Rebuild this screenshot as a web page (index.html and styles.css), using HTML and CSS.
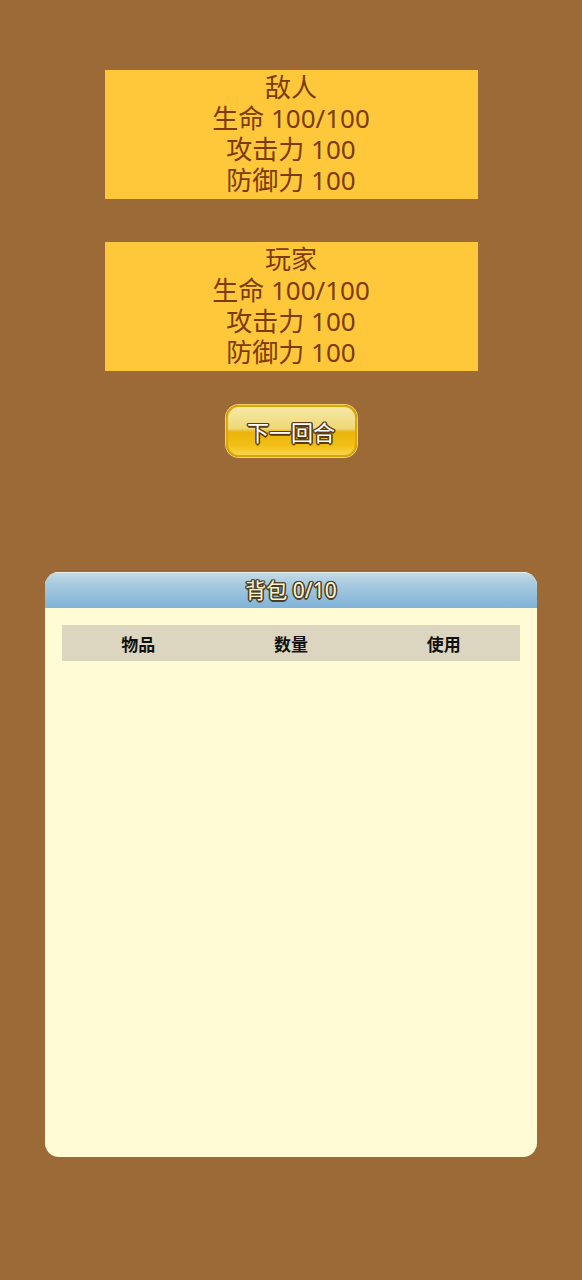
FILE: index.html
```html
<!DOCTYPE html>
<html lang="zh">
<head>
<meta charset="utf-8">
<link rel="stylesheet" href="styles.css">
</head>
<body>
<div class="page">
  <div class="stat-box">
    <div>敌人</div>
    <div>生命 100/100</div>
    <div>攻击力 100</div>
    <div>防御力 100</div>
  </div>
  <div class="stat-box player">
    <div>玩家</div>
    <div>生命 100/100</div>
    <div>攻击力 100</div>
    <div>防御力 100</div>
  </div>
  <button class="next-btn"><span>下一回合</span></button>
  <div class="bag">
    <div class="bag-header">背包 0/10</div>
    <div class="bag-body">
      <div class="bag-table-head">
        <div>物品</div>
        <div>数量</div>
        <div>使用</div>
      </div>
    </div>
  </div>
</div>
</body>
</html>
```

FILE: styles.css
```css
html, body {
  margin: 0;
  padding: 0;
  background: #9b6a37;
}
body {
  font-family: "Noto Sans", "Noto Sans CJK SC", sans-serif;
  height: 1280px;
}
.page {
  display: flex;
  flex-direction: column;
  align-items: center;
  padding-top: 70px;
}
.stat-box {
  width: 373px;
  box-sizing: border-box;
  height: 129px;
  padding: 2px 0 3px;
  background: #ffc83b;
  color: #7b3b0c;
  font-size: 26px;
  line-height: 31px;
  text-align: center;
}
.stat-box.player {
  margin-top: 43px;
}
.next-btn {
  margin-top: 34px;
  width: 131px;
  height: 52px;
  border-radius: 13px;
  border: 2px solid #d9a70a;
  box-shadow: 0 0 0 1px #f3d46a;
  background: linear-gradient(to bottom, #f6e9a6 0%, #efd876 45%, #eab40c 52%, #f2bf16 80%, #f8d54a 100%);
  padding: 0;
  font-family: "Noto Sans", "Noto Sans CJK SC", sans-serif;
  font-size: 22px;
  font-weight: 400;
  color: #ffffff;
  text-shadow: -1.5px 0 #5a3a12, 1.5px 0 #5a3a12, 0 -1.5px #5a3a12, 0 1.5px #5a3a12,
    -1px -1px #5a3a12, 1px 1px #5a3a12, -1px 1px #5a3a12, 1px -1px #5a3a12;
  box-sizing: border-box;
}
.bag {
  margin-top: 115px;
  width: 492px;
  height: 585px;
  border-radius: 14px;
  background: #fffbd5;
  overflow: hidden;
  display: flex;
  flex-direction: column;
}
.bag-header {
  height: 36px;
  background: linear-gradient(to bottom, #c4dbe3 0%, #a9cbe0 30%, #7fb3d8 100%);
  border-top: 1px solid #e8eef0;
  box-sizing: border-box;
  text-align: center;
  font-size: 21px;
  line-height: 34px;
  color: #fff5d2;
  text-shadow: -1.5px 0 #4c3f24, 1.5px 0 #4c3f24, 0 -1.5px #4c3f24, 0 1.5px #4c3f24,
    -1px -1px #4c3f24, 1px 1px #4c3f24, -1px 1px #4c3f24, 1px -1px #4c3f24;
}
.bag-body {
  flex: 1;
  padding: 17px;
}
.bag-table-head {
  display: grid;
  grid-template-columns: 1fr 1fr 1fr;
  height: 36px;
  background: #dcd6c1;
  align-items: center;
  text-align: center;
  font-size: 17px;
  font-weight: 700;
  color: #111;
}
```
